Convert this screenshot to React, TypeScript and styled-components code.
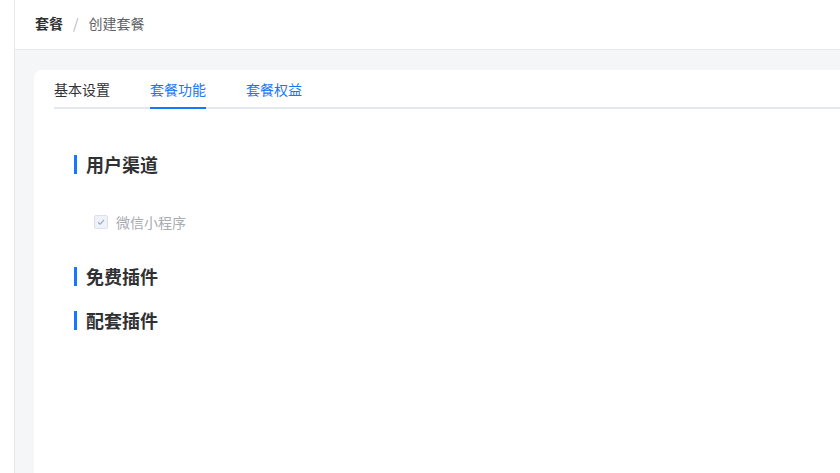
import styled, { createGlobalStyle } from 'styled-components';

const GlobalStyle = createGlobalStyle`
  html, body {
    margin: 0;
    padding: 0;
    overflow: hidden;
    background: #ffffff;
    font-family: "Noto Sans CJK SC", "Noto Sans", "Liberation Sans", sans-serif;
  }
`;

const tabs = ['基本设置', '套餐功能', '套餐权益'];

const sections = [
  { title: '用户渠道', options: ['微信小程序'] },
  { title: '免费插件', options: [] },
  { title: '配套插件', options: [] },
];

const App = () => {
  return (
    <Layout>
      <GlobalStyle />
      <Sidebar />
      <Main>
        <Header>
          <Crumb strong>套餐</Crumb>
          <Separator>/</Separator>
          <Crumb>创建套餐</Crumb>
        </Header>
        <Content>
          <Card>
            <TabBar>
              {tabs.map((tab, i) => (
                <Tab key={tab} active={i === 1} blue={i > 0}>
                  {tab}
                </Tab>
              ))}
            </TabBar>
            <Panel>
              {sections.map((section) => (
                <Section key={section.title}>
                  <Heading>{section.title}</Heading>
                  {section.options.length > 0 && (
                    <Options>
                      {section.options.map((opt) => (
                        <CheckLabel key={opt}>
                          <CheckBox>
                            <svg width="10" height="10" viewBox="0 0 10 10">
                              <path d="M2 5.2 L4.1 7.2 L8 3" fill="none" stroke="#a8abb2" strokeWidth="1.2" />
                            </svg>
                          </CheckBox>
                          {opt}
                        </CheckLabel>
                      ))}
                    </Options>
                  )}
                </Section>
              ))}
            </Panel>
          </Card>
        </Content>
      </Main>
    </Layout>
  );
};

const Layout = styled.div`
  display: flex;
  width: 100vw;
  height: 100vh;
  overflow: hidden;
`;

const Sidebar = styled.aside`
  width: 14px;
  flex-shrink: 0;
  background: #ffffff;
  border-right: 1px solid #e6e8eb;
`;

const Main = styled.div`
  flex: 1;
  min-width: 0;
  display: flex;
  flex-direction: column;
  background: #f5f6f8;
`;

const Header = styled.div`
  height: 50px;
  flex-shrink: 0;
  display: flex;
  align-items: center;
  padding: 0 0 3px 20px;
  box-sizing: border-box;
  background: #ffffff;
  border-bottom: 1px solid #e6e8eb;
  font-size: 14px;
`;

const Crumb = styled.span<{ strong?: boolean }>`
  color: ${(p) => (p.strong ? '#303133' : '#606266')};
  font-weight: ${(p) => (p.strong ? 700 : 400)};
`;

const Separator = styled.span`
  margin: 0 10px;
  color: #b4b7bd;
`;

const Content = styled.div`
  flex: 1;
  display: flex;
  padding: 20px 0 0 19px;
`;

const Card = styled.div`
  flex: 1;
  background: #ffffff;
  border-radius: 8px 0 0 0;
  padding: 4px 0 0 20px;
`;

const TabBar = styled.div`
  display: flex;
  gap: 40px;
  border-bottom: 2px solid #e4e7ed;
`;

const Tab = styled.div<{ active?: boolean; blue?: boolean }>`
  height: 33px;
  padding-bottom: 3px;
  box-sizing: border-box;
  display: flex;
  align-items: center;
  font-size: 14px;
  color: ${(p) => (p.blue ? '#1677ff' : '#303133')};
  position: relative;

  &::after {
    content: '';
    display: ${(p) => (p.active ? 'block' : 'none')};
    position: absolute;
    left: 0;
    right: 0;
    bottom: -2px;
    height: 2px;
    background: #1677ff;
  }
`;

const Panel = styled.div`
  padding: 45px 0 0 20px;
`;

const Section = styled.div`
  margin-bottom: 24px;
`;

const Heading = styled.h3`
  margin: 0;
  display: flex;
  align-items: center;
  gap: 9px;
  height: 20px;
  font-size: 18px;
  font-weight: 700;
  color: #303133;

  &::before {
    content: '';
    width: 3px;
    height: 19px;
    background: #1677ff;
  }
`;

const Options = styled.div`
  display: flex;
  gap: 30px;
  padding: 38px 0 10px 20px;
`;

const CheckLabel = styled.label`
  display: flex;
  align-items: center;
  gap: 8px;
  height: 20px;
  font-size: 14px;
  color: #a8abb2;
  cursor: not-allowed;
`;

const CheckBox = styled.span`
  width: 12px;
  height: 12px;
  display: flex;
  align-items: center;
  justify-content: center;
  border: 1px solid #dcdfe6;
  border-radius: 2px;
  background: #edf2fc;
`;

export default App;
